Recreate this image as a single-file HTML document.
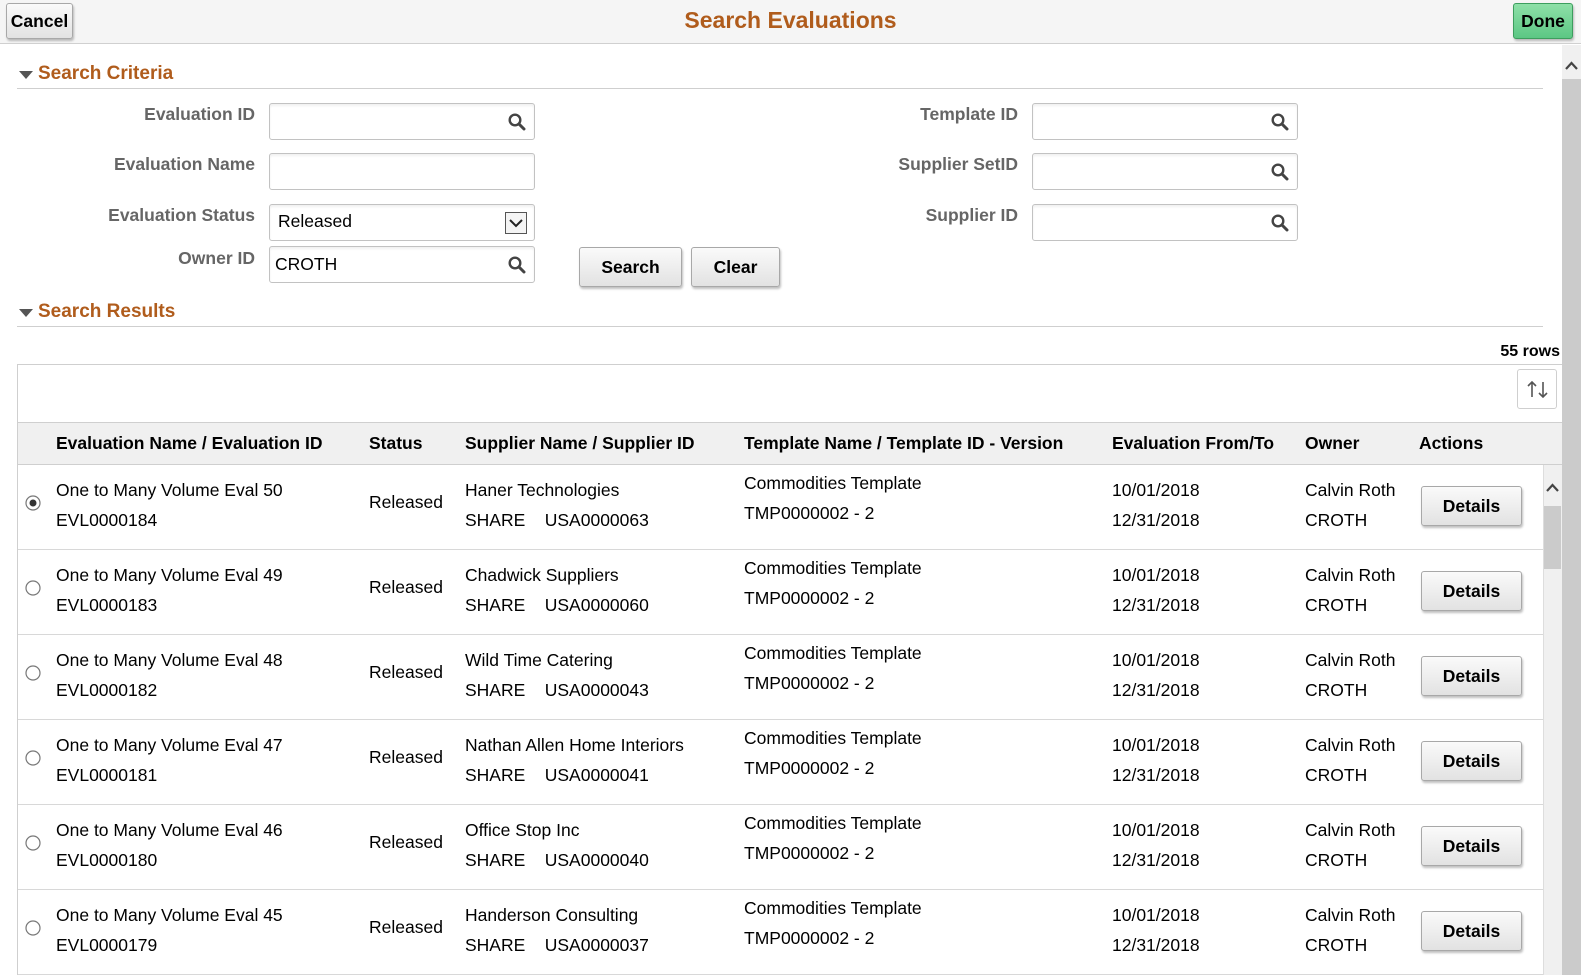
<!DOCTYPE html>
<html><head><meta charset="utf-8"><style>
*{box-sizing:border-box;margin:0;padding:0}
body{width:1581px;height:975px;overflow:hidden;background:#fff;font-family:"Liberation Sans",Arial,sans-serif;font-size:17.5px;color:#000;position:relative}
.a{position:absolute;white-space:nowrap}
.top{position:absolute;left:0;top:0;width:1581px;height:44px;background:#f5f5f5;border-bottom:1px solid #d0d0d0}
.btn{position:absolute;border:1px solid #a8a8a8;border-radius:3px;background:linear-gradient(#fafafa,#e2e2e2);box-shadow:1px 2px 2px rgba(0,0,0,.25);font-weight:bold;text-align:center;color:#000}
.ttl{color:#b05c1c;font-weight:bold}
.sec{color:#b05c1c;font-weight:bold;font-size:19px}
.tri{position:absolute;width:0;height:0;border-left:7px solid transparent;border-right:7px solid transparent;border-top:8px solid #555}
.hr{position:absolute;left:17px;width:1526px;height:1px;background:#cfcfcf}
.lbl{position:absolute;text-align:right;font-weight:bold;color:#666;width:240px}
.inp{position:absolute;width:266px;height:37px;border:1px solid #c2c2c2;border-radius:3px;background:#fff;box-shadow:inset 0 2px 2px rgba(0,0,0,.06)}
.inp span{position:absolute;left:5px;top:8px}
.mag{position:absolute;right:8px;top:9px}
.row{position:absolute;left:18px;width:1525px;border-bottom:1px solid #d8d8d8}
.hd{font-weight:bold}
</style></head><body>
<div class="top"></div>
<div class="btn" style="left:6px;top:3px;width:67px;height:36px;line-height:34px">Cancel</div>
<div class="a ttl" style="left:0;width:1581px;text-align:center;top:7px;font-size:23px">Search Evaluations</div>
<div class="btn" style="left:1513px;top:3px;width:60px;height:36px;line-height:34px;background:linear-gradient(#8ee0a8,#5cc784);border-color:#3d9e5e">Done</div>

<div class="a" style="left:1562px;top:45px;width:19px;height:930px;background:#f0f0f0"></div>
<div class="a" style="left:1562px;top:79px;width:19px;height:896px;background:#cbcbcb"></div>
<svg class="a" style="left:1564px;top:60px" width="15" height="12"><path d="M2 9 L7.5 3 L13 9" stroke="#444" stroke-width="2.2" fill="none"/></svg>

<div class="tri" style="left:19px;top:71px"></div>
<div class="a sec" style="left:38px;top:63px">Search Criteria</div>
<div class="hr" style="top:88px"></div>

<div class="lbl" style="left:15px;top:104px">Evaluation ID</div>
<div class="inp" style="left:269px;top:103px"><svg class="mag" width="18" height="18"><circle cx="7" cy="7" r="5.3" stroke="#444" stroke-width="2.4" fill="none"/><path d="M11 11 L16 16" stroke="#444" stroke-width="3" stroke-linecap="round"/></svg></div>
<div class="lbl" style="left:15px;top:154px">Evaluation Name</div>
<div class="inp" style="left:269px;top:153px"></div>
<div class="lbl" style="left:15px;top:205px">Evaluation Status</div>
<div class="inp" style="left:269px;top:204px"><span style="left:8px;top:6px">Released</span><div style="position:absolute;right:7px;top:7px;width:22px;height:22px;border:1px solid #555;background:#f4f4f4"><svg width="20" height="20" style="position:absolute;left:0;top:0"><path d="M4 7 L10 13 L16 7" stroke="#222" stroke-width="2" fill="none"/></svg></div></div>
<div class="lbl" style="left:15px;top:248px">Owner ID</div>
<div class="inp" style="left:269px;top:246px"><span style="top:7px">CROTH</span><svg class="mag" width="18" height="18"><circle cx="7" cy="7" r="5.3" stroke="#444" stroke-width="2.4" fill="none"/><path d="M11 11 L16 16" stroke="#444" stroke-width="3" stroke-linecap="round"/></svg></div>

<div class="btn" style="left:579px;top:247px;width:103px;height:40px;line-height:38px">Search</div>
<div class="btn" style="left:691px;top:247px;width:89px;height:40px;line-height:38px">Clear</div>

<div class="lbl" style="left:778px;top:104px">Template ID</div>
<div class="inp" style="left:1032px;top:103px"><svg class="mag" width="18" height="18"><circle cx="7" cy="7" r="5.3" stroke="#444" stroke-width="2.4" fill="none"/><path d="M11 11 L16 16" stroke="#444" stroke-width="3" stroke-linecap="round"/></svg></div>
<div class="lbl" style="left:778px;top:154px">Supplier SetID</div>
<div class="inp" style="left:1032px;top:153px"><svg class="mag" width="18" height="18"><circle cx="7" cy="7" r="5.3" stroke="#444" stroke-width="2.4" fill="none"/><path d="M11 11 L16 16" stroke="#444" stroke-width="3" stroke-linecap="round"/></svg></div>
<div class="lbl" style="left:778px;top:205px">Supplier ID</div>
<div class="inp" style="left:1032px;top:204px"><svg class="mag" width="18" height="18"><circle cx="7" cy="7" r="5.3" stroke="#444" stroke-width="2.4" fill="none"/><path d="M11 11 L16 16" stroke="#444" stroke-width="3" stroke-linecap="round"/></svg></div>

<div class="tri" style="left:19px;top:309px"></div>
<div class="a sec" style="left:38px;top:301px">Search Results</div>
<div class="hr" style="top:326px"></div>
<div class="a" style="right:21px;top:343px;font-weight:bold;font-size:16px">55 rows</div>

<div class="a" style="left:17px;top:364px;width:1545px;height:611px;border-left:1px solid #cfcfcf;border-top:1px solid #cfcfcf"></div>
<div class="a" style="left:1517px;top:369px;width:40px;height:40px;border:1px solid #cfcfcf;border-radius:3px;background:#fff"><svg width="40" height="40" style="position:absolute;left:0;top:0"><path d="M14 27 V12 M10 16 L14 12 L18 16 M25 12 V27 M21 23 L25 27 L29 23" stroke="#555" stroke-width="1.6" fill="none"/></svg></div>
<div class="a" style="left:18px;top:422px;width:1544px;height:43px;background:#f0f0f0;border-top:1px solid #cfcfcf;border-bottom:1px solid #cfcfcf"></div>
<div class="a hd" style="left:56px;top:433px">Evaluation Name / Evaluation ID</div>
<div class="a hd" style="left:369px;top:433px">Status</div>
<div class="a hd" style="left:465px;top:433px">Supplier Name / Supplier ID</div>
<div class="a hd" style="left:744px;top:433px">Template Name / Template ID - Version</div>
<div class="a hd" style="left:1112px;top:433px">Evaluation From/To</div>
<div class="a hd" style="left:1305px;top:433px">Owner</div>
<div class="a hd" style="left:1419px;top:433px">Actions</div>

<div class="a" style="left:1543px;top:465px;width:19px;height:510px;background:#f0f0f0;border-left:1px solid #ddd"></div>
<div class="a" style="left:1544px;top:506px;width:17px;height:63px;background:#cbcbcb"></div>
<svg class="a" style="left:1545px;top:482px" width="15" height="12"><path d="M2 9 L7.5 3 L13 9" stroke="#444" stroke-width="2.2" fill="none"/></svg>

<div id="rows"></div>
<script>
var d=[["50","184","Haner Technologies","USA0000063"],["49","183","Chadwick Suppliers","USA0000060"],["48","182","Wild Time Catering","USA0000043"],["47","181","Nathan Allen Home Interiors","USA0000041"],["46","180","Office Stop Inc","USA0000040"],["45","179","Handerson Consulting","USA0000037"]];
var h="";
d.forEach(function(r,i){
var t=465+i*85;
h+='<div class="row" style="top:'+t+'px;height:85px"></div>';
var rad=i==0?'<circle cx="8" cy="8" r="3.5" fill="#333"/>':'';
h+='<svg class="a" style="left:25px;top:'+(t+30)+'px" width="17" height="17"><circle cx="8" cy="8" r="7" fill="#fff" stroke="#777" stroke-width="1.2"/>'+rad+'</svg>';
h+='<div class="a" style="left:56px;top:'+(t+15)+'px">One to Many Volume Eval '+r[0]+'</div>';
h+='<div class="a" style="left:56px;top:'+(t+45)+'px">EVL0000'+r[1]+'</div>';
h+='<div class="a" style="left:369px;top:'+(t+27)+'px">Released</div>';
h+='<div class="a" style="left:465px;top:'+(t+15)+'px">'+r[2]+'</div>';
h+='<div class="a" style="left:465px;top:'+(t+45)+'px">SHARE&nbsp;&nbsp;&nbsp;&nbsp;'+r[3]+'</div>';
h+='<div class="a" style="left:744px;top:'+(t+8)+'px">Commodities Template</div>';
h+='<div class="a" style="left:744px;top:'+(t+38)+'px">TMP0000002 - 2</div>';
h+='<div class="a" style="left:1112px;top:'+(t+15)+'px">10/01/2018</div>';
h+='<div class="a" style="left:1112px;top:'+(t+45)+'px">12/31/2018</div>';
h+='<div class="a" style="left:1305px;top:'+(t+15)+'px">Calvin Roth</div>';
h+='<div class="a" style="left:1305px;top:'+(t+45)+'px">CROTH</div>';
h+='<div class="btn" style="left:1421px;top:'+(t+21)+'px;width:101px;height:40px;line-height:38px">Details</div>';
});
document.getElementById("rows").innerHTML=h;
</script>
</body></html>
